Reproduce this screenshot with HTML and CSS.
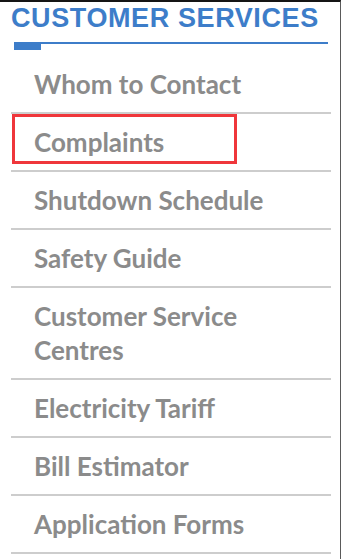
FILE: index.html
```html
<!DOCTYPE html>
<html lang="en">
<head>
<meta charset="utf-8">
<title>Customer Services</title>
<link rel="stylesheet" href="styles.css">
</head>
<body>
<div class="frame">
  <section class="panel">
    <h2 class="panel-title">CUSTOMER SERVICES</h2>
    <div class="panel-rule"></div>
    <ul class="menu">
      <li class="menu-item"><a href="#">Whom to Contact</a></li>
      <li class="menu-item is-highlighted"><a href="#">Complaints</a></li>
      <li class="menu-item"><a href="#">Shutdown Schedule</a></li>
      <li class="menu-item"><a href="#">Safety Guide</a></li>
      <li class="menu-item"><a href="#">Customer Service<br>Centres</a></li>
      <li class="menu-item"><a href="#">Electricity Tariff</a></li>
      <li class="menu-item"><a href="#">Bill Estimator</a></li>
      <li class="menu-item"><a href="#">Application Forms</a></li>
    </ul>
  </section>
</div>
</body>
</html>
```

FILE: styles.css
```css
html, body {
  margin: 0;
  padding: 0;
  background: #ffffff;
}

.frame {
  box-sizing: border-box;
  width: 341px;
  height: 559px;
  border-top: 2px solid #151515;
  border-right: 1px solid #5a5a5a;
  overflow: hidden;
}

.panel {
  padding-left: 11px;
  width: 320px;
}

.panel-title {
  margin: 0;
  font-family: "Liberation Sans", Arial, sans-serif;
  font-weight: bold;
  font-size: 27px;
  line-height: 32px;
  letter-spacing: 0.6px;
  color: #3d7dc9;
  white-space: nowrap;
}

.panel-rule {
  margin: 8px 0 0 3px;
  width: 314px;
  height: 8px;
  background:
    linear-gradient(#3d7dc9, #3d7dc9) 0 0 / 27px 8px no-repeat,
    linear-gradient(#3d7dc9, #3d7dc9) 0 0 / 100% 2px no-repeat;
}

.menu {
  list-style: none;
  margin: 6px 0 0 0;
  padding: 0;
}

.menu-item {
  padding: 11px 0 11px 23px;
  border-bottom: 2px solid #cdcdcd;
  font-family: Lato, "Open Sans", sans-serif;
  font-weight: bold;
  font-size: 26px;
  line-height: 34px;
}

.menu-item a {
  color: #8b8b8b;
  text-decoration: none;
}

.is-highlighted {
  position: relative;
}

.is-highlighted::after {
  content: "";
  position: absolute;
  left: 1px;
  top: 0;
  width: 225px;
  height: 50px;
  box-sizing: border-box;
  border: 3px solid #ef363b;
}
```
